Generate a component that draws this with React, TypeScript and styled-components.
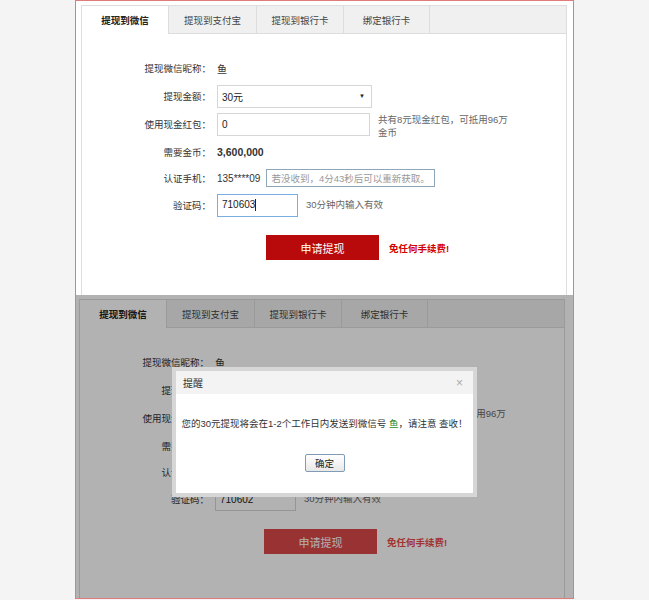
import styled, { createGlobalStyle } from 'styled-components';

const GlobalStyle = createGlobalStyle`
  body {
    margin: 0;
    background: #f4f4f4;
    font-family: "Liberation Sans", "Noto Sans CJK SC", sans-serif;
  }
`;

const Frame = styled.div`
  width: 499px;
  height: 599px;
  margin: 0 auto;
  border: 1px solid #e07b7b;
  box-sizing: border-box;
  background: #fff;
  display: flex;
  flex-direction: column;
`;

const Shot = styled.div<{ $h: number; $shift: number }>`
  position: relative;
  height: ${({ $h }) => $h}px;
  flex-shrink: 0;
  overflow: hidden;
  padding: 4px 0 0 ${({ $shift }) => $shift}px;
  box-sizing: border-box;
  background: #fff;
`;

const Panel = styled.div`
  width: 486px;
  height: 420px;
  box-sizing: border-box;
  border: 1px solid #ddd;
  background: #fff;
`;

const TabBar = styled.div`
  display: flex;
  height: 28px;
  box-sizing: border-box;
  background: #f0f0f0;
  border-bottom: 1px solid #ddd;
`;

const Tab = styled.div<{ $w: number; $active?: boolean }>`
  width: ${({ $w }) => $w}px;
  height: ${({ $active }) => ($active ? 28 : 27)}px;
  box-sizing: border-box;
  border-right: 1px solid #ddd;
  display: flex;
  align-items: center;
  justify-content: center;
  font-size: 9.5px;
  color: ${({ $active }) => ($active ? '#222' : '#444')};
  font-weight: ${({ $active }) => ($active ? 'bold' : 'normal')};
  background: ${({ $active }) => ($active ? '#fff' : '#f0f0f0')};
`;

const Form = styled.div`
  padding-top: 20px;
  display: flex;
  flex-direction: column;
`;

const Row = styled.div<{ $h: number }>`
  display: flex;
  align-items: center;
  height: ${({ $h }) => $h}px;
  gap: 6px;
`;

const Label = styled.div`
  width: 129px;
  flex-shrink: 0;
  text-align: right;
  font-size: 9.5px;
  color: #333;
`;

const Value = styled.div<{ $bold?: boolean }>`
  font-size: ${({ $bold }) => ($bold ? 10.5 : 10)}px;
  color: #333;
  font-weight: ${({ $bold }) => ($bold ? 'bold' : 'normal')};
`;

const Field = styled.div<{ $w: number; $focus?: boolean }>`
  width: ${({ $w }) => $w}px;
  height: 23px;
  box-sizing: border-box;
  border: 1px solid ${({ $focus }) => ($focus ? '#7aaee0' : '#d6d6d6')};
  display: flex;
  align-items: center;
  justify-content: space-between;
  padding: 0 6px 0 4px;
  font-size: 10px;
  color: #222;
  background: #fff;
`;

const Arrow = styled.span`
  font-size: 6px;
  color: #222;
`;

const Caret = styled.span`
  display: inline-block;
  width: 1px;
  height: 12px;
  background: #222;
  vertical-align: middle;
`;

const Note = styled.div<{ $top?: boolean }>`
  font-size: 9.5px;
  line-height: 12.5px;
  color: #666;
  width: 134px;
  margin-left: 2px;
  align-self: ${({ $top }) => ($top ? 'flex-start' : 'center')};
  margin-top: ${({ $top }) => ($top ? 4 : 0)}px;
`;

const Hint = styled.div`
  height: 18px;
  box-sizing: border-box;
  border: 1px solid #8fa6b8;
  padding: 0 4px;
  display: flex;
  align-items: center;
  font-size: 9.5px;
  color: #999;
  white-space: nowrap;
`;

const Actions = styled.div`
  display: flex;
  align-items: center;
  gap: 10px;
  margin: 15px 0 0 184px;
`;

const SubmitButton = styled.button<{ $muted?: boolean }>`
  width: 113px;
  height: 25px;
  border: none;
  background: ${({ $muted }) => ($muted ? '#dc4848' : '#b80a0a')};
  color: #fff;
  font-family: inherit;
  font-size: 11px;
  padding: 0;
`;

const Free = styled.span<{ $muted?: boolean }>`
  font-size: 9.5px;
  font-weight: bold;
  color: ${({ $muted }) => ($muted ? '#e84a4a' : '#d40000')};
`;

const Overlay = styled.div`
  position: absolute;
  inset: 0;
  background: rgba(0, 0, 0, 0.3);
`;

const Dialog = styled.div`
  position: absolute;
  left: 96px;
  top: 72px;
  width: 305px;
  height: 130px;
  box-sizing: border-box;
  border: 4px solid #d6d6d6;
  background: #fff;
  display: flex;
  flex-direction: column;
`;

const DialogHead = styled.div`
  height: 23px;
  background: #f3f3f3;
  display: flex;
  align-items: center;
  justify-content: space-between;
  padding: 0 10px 0 7px;
  font-size: 10px;
  color: #333;
`;

const Close = styled.span`
  font-size: 12px;
  color: #aaa;
`;

const DialogBody = styled.div`
  flex: 1;
  display: flex;
  flex-direction: column;
  align-items: center;
  padding-top: 22px;
  font-size: 9.5px;
  color: #333;
`;

const Nick = styled.span`
  color: #2a8a2a;
`;

const OkButton = styled.button`
  margin-top: 24px;
  width: 40px;
  height: 18px;
  padding: 0;
  border: 1px solid #7f9bb5;
  border-radius: 2px;
  background: linear-gradient(#fff, #e8e8e8);
  font-family: inherit;
  font-size: 9.5px;
  color: #222;
`;

const tabs = [
  { name: '提现到微信', w: 87 },
  { name: '提现到支付宝', w: 88 },
  { name: '提现到银行卡', w: 87 },
  { name: '绑定银行卡', w: 86 },
];

function WithdrawPanel({ code, focus, muted }: { code: string; focus?: boolean; muted?: boolean }) {
  return (
    <Panel>
      <TabBar>
        {tabs.map((t, i) => (
          <Tab key={t.name} $w={t.w} $active={i === 0}>
            {t.name}
          </Tab>
        ))}
      </TabBar>
      <Form>
        <Row $h={28}>
          <Label>提现微信昵称：</Label>
          <Value>鱼</Value>
        </Row>
        <Row $h={28}>
          <Label>提现金额：</Label>
          <Field $w={155}>
            30元<Arrow>▼</Arrow>
          </Field>
        </Row>
        <Row $h={28}>
          <Label>使用现金红包：</Label>
          <Field $w={153}>0</Field>
          <Note $top>共有8元现金红包，可抵用96万金币</Note>
        </Row>
        <Row $h={28}>
          <Label>需要金币：</Label>
          <Value $bold>3,600,000</Value>
        </Row>
        <Row $h={24}>
          <Label>认证手机：</Label>
          <Value>135****09</Value>
          <Hint>若没收到，4分43秒后可以重新获取。</Hint>
        </Row>
        <Row $h={30}>
          <Label>验证码：</Label>
          <Field $w={81} $focus={focus}>
            <span>
              {code}
              {focus && <Caret />}
            </span>
          </Field>
          <Note>30分钟内输入有效</Note>
        </Row>
        <Actions>
          <SubmitButton $muted={muted}>申请提现</SubmitButton>
          <Free $muted={muted}>免任何手续费!</Free>
        </Actions>
      </Form>
    </Panel>
  );
}

export default function App() {
  return (
    <>
      <GlobalStyle />
      <Frame>
        <Shot $h={294} $shift={5}>
          <WithdrawPanel code="710603" focus />
        </Shot>
        <Shot $h={303} $shift={3}>
          <WithdrawPanel code="710602" muted />
          <Overlay />
          <Dialog>
            <DialogHead>
              提醒<Close>×</Close>
            </DialogHead>
            <DialogBody>
              <div>
                您的30元提现将会在1-2个工作日内发送到微信号 <Nick>鱼</Nick>，请注意 查收！
              </div>
              <OkButton>确定</OkButton>
            </DialogBody>
          </Dialog>
        </Shot>
      </Frame>
    </>
  );
}
